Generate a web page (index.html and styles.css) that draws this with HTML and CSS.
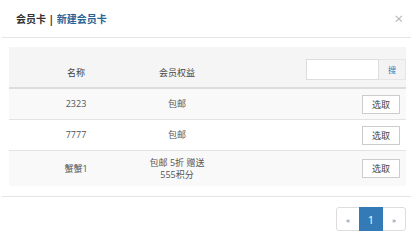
FILE: index.html
```html
<!DOCTYPE html>
<html lang="zh-CN">
<head>
    <meta charset="UTF-8">
    <title>会员卡</title>
    <link rel="stylesheet" href="styles.css">
</head>
<body>
    <div class="modal">
        <div class="modal-header">
            <h4 class="modal-title">会员卡 | <a href="#">新建会员卡</a></h4>
            <span class="close">&times;</span>
        </div>
        <div class="modal-body">
            <table class="card-table">
                <thead>
                    <tr>
                        <th class="col-name">名称</th>
                        <th class="col-right">会员权益</th>
                        <th class="col-action">
                            <div class="search-group">
                                <input type="text" class="search-input">
                                <button class="search-btn">搜</button>
                            </div>
                        </th>
                    </tr>
                </thead>
                <tbody>
                    <tr class="odd">
                        <td>2323</td>
                        <td>包邮</td>
                        <td class="action"><button class="pick-btn">选取</button></td>
                    </tr>
                    <tr>
                        <td>7777</td>
                        <td>包邮</td>
                        <td class="action"><button class="pick-btn">选取</button></td>
                    </tr>
                    <tr class="odd tall">
                        <td>蟹蟹1</td>
                        <td>包邮 5折 赠送<br>555积分</td>
                        <td class="action"><button class="pick-btn">选取</button></td>
                    </tr>
                </tbody>
            </table>
        </div>
        <div class="modal-footer">
            <ul class="pagination">
                <li><a href="#">&laquo;</a></li>
                <li class="active"><a href="#">1</a></li>
                <li><a href="#">&raquo;</a></li>
            </ul>
        </div>
    </div>
</body>
</html>
```

FILE: styles.css
```css
body {
    margin: 0;
    background-color: #fff;
    font-family: "Open Sans", "Noto Sans CJK SC", sans-serif;
    font-size: 9px;
    color: #555;
}

.modal {
    margin: 0 3px 0 2px;
    background-color: #fff;
}

.modal-header {
    display: flex;
    align-items: center;
    justify-content: space-between;
    height: 37px;
    padding: 0 8px 0 14px;
    border-bottom: 1px solid #e5e5e5;
    box-sizing: content-box;
}

.modal-title {
    margin: 0;
    font-size: 10px;
    font-weight: bold;
    color: #333;
}

.modal-title a {
    color: #2a6496;
    text-decoration: none;
}

.close {
    font-size: 15px;
    color: #b5b5b5;
    line-height: 1;
}

.modal-body {
    padding: 9px 5px 10px 7px;
}

.card-table {
    width: 100%;
    border-collapse: collapse;
    table-layout: fixed;
}

.card-table th {
    height: 41px;
    padding: 0 5px 8px;
    box-sizing: border-box;
    background-color: #f5f5f5;
    border-bottom: 2px solid #ddd;
    font-weight: normal;
    color: #444;
    vertical-align: bottom;
    text-align: center;
}

.col-name {
    width: 134px;
}

.col-right {
    width: 68px;
}

.card-table th.col-action {
    padding: 0 0 7px;
}

.search-group {
    display: flex;
    justify-content: flex-end;
}

.search-input {
    width: 73px;
    height: 21px;
    margin: 0;
    padding: 0 4px;
    box-sizing: border-box;
    border: 1px solid #ddd;
    background-color: #fff;
}

.search-btn {
    width: 27px;
    height: 21px;
    margin: 0;
    padding: 0;
    border: 1px solid #e6e6e6;
    border-left: none;
    background-color: #f3f3f3;
    color: #337ab7;
    font-family: "Noto Sans CJK SC", sans-serif;
    font-size: 8px;
}

.card-table td {
    height: 30px;
    padding: 0 5px;
    border-bottom: 1px solid #e3e3e3;
    text-align: center;
    vertical-align: middle;
    line-height: 12px;
}

.card-table tr.odd td {
    background-color: #f9f9f9;
}

.card-table tr.tall td {
    height: 35px;
    border-bottom: none;
}

.card-table td.action {
    text-align: right;
    padding-right: 6px;
}

.pick-btn {
    width: 38px;
    height: 19px;
    padding: 0;
    border: 1px solid #ccc;
    background-color: #fff;
    color: #444;
    font-family: "Noto Sans CJK SC", sans-serif;
    font-size: 9px;
    vertical-align: middle;
}

.modal-footer {
    display: flex;
    justify-content: flex-end;
    padding: 10px 5px 0 0;
    border-top: 1px solid #e5e5e5;
}

.pagination {
    display: flex;
    margin: 0;
    padding: 0;
    list-style: none;
}

.pagination a {
    display: flex;
    align-items: center;
    justify-content: center;
    width: 24px;
    height: 24px;
    box-sizing: border-box;
    border: 1px solid #ddd;
    margin-left: -1px;
    color: #337ab7;
    font-size: 8px;
    text-decoration: none;
    background-color: #fff;
}

.pagination li:first-child a {
    margin-left: 0;
    border-radius: 3px 0 0 3px;
}

.pagination li:last-child a {
    border-radius: 0 3px 3px 0;
}

.pagination li.active a {
    background-color: #337ab7;
    border-color: #337ab7;
    color: #fff;
    font-size: 11px;
    position: relative;
}
```
